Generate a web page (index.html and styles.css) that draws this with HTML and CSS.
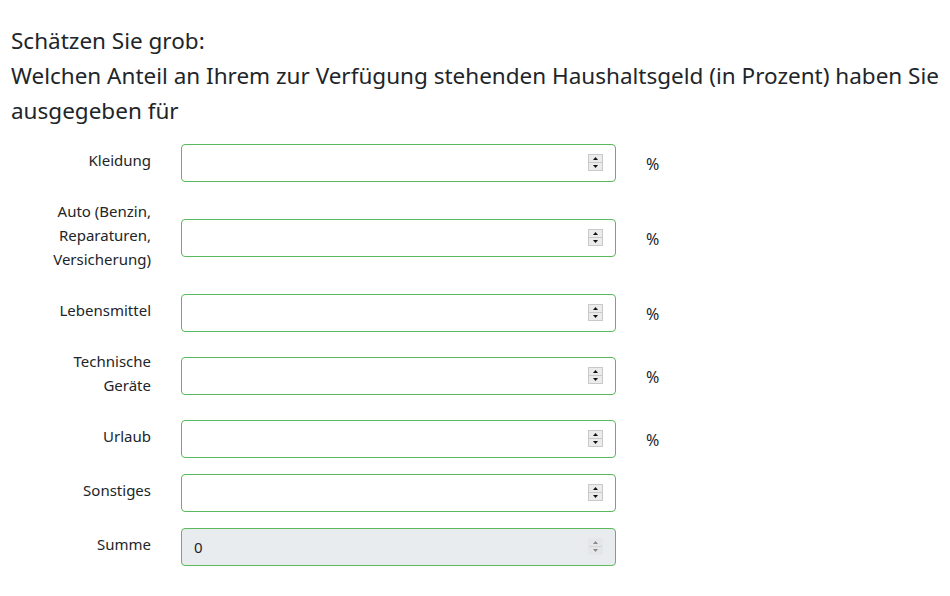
FILE: index.html
```html
<!DOCTYPE html>
<html lang="de">
<head>
    <meta charset="UTF-8">
    <meta name="viewport" content="width=device-width, initial-scale=1.0">
    <title>Haushaltsgeld</title>
    <link rel="stylesheet" href="styles.css">
</head>
<body>

    <div class="survey">
        <!-- Frage -->
        <p class="question">
            Schätzen Sie grob:<br>
            Welchen Anteil an Ihrem zur Verfügung stehenden Haushaltsgeld (in Prozent) haben Sie ausgegeben für
        </p>

        <div class="form-row spaced">
            <label class="field-label" for="kleidung">Kleidung</label>
            <div class="field">
                <input class="form-control" type="number" id="kleidung">
                <svg class="spinner" width="15" height="17" viewBox="0 0 15 17"><rect x="0.5" y="0.5" width="14" height="16" fill="#ebebeb" stroke="#c9c9c9"/><line x1="1" y1="8.5" x2="14" y2="8.5" stroke="#c9c9c9"/><polygon points="5,6 10,6 7.5,3" fill="#111"/><polygon points="5,11 10,11 7.5,14" fill="#111"/></svg>
            </div>
            <span class="unit">%</span>
        </div>

        <div class="form-row spaced">
            <label class="field-label" for="auto">Auto (Benzin, Reparaturen, Versicherung)</label>
            <div class="field">
                <input class="form-control" type="number" id="auto">
                <svg class="spinner" width="15" height="17" viewBox="0 0 15 17"><rect x="0.5" y="0.5" width="14" height="16" fill="#ebebeb" stroke="#c9c9c9"/><line x1="1" y1="8.5" x2="14" y2="8.5" stroke="#c9c9c9"/><polygon points="5,6 10,6 7.5,3" fill="#111"/><polygon points="5,11 10,11 7.5,14" fill="#111"/></svg>
            </div>
            <span class="unit">%</span>
        </div>

        <div class="form-row spaced">
            <label class="field-label" for="lebensmittel">Lebensmittel</label>
            <div class="field">
                <input class="form-control" type="number" id="lebensmittel">
                <svg class="spinner" width="15" height="17" viewBox="0 0 15 17"><rect x="0.5" y="0.5" width="14" height="16" fill="#ebebeb" stroke="#c9c9c9"/><line x1="1" y1="8.5" x2="14" y2="8.5" stroke="#c9c9c9"/><polygon points="5,6 10,6 7.5,3" fill="#111"/><polygon points="5,11 10,11 7.5,14" fill="#111"/></svg>
            </div>
            <span class="unit">%</span>
        </div>

        <div class="form-row spaced">
            <label class="field-label" for="technik">Technische Geräte</label>
            <div class="field">
                <input class="form-control" type="number" id="technik">
                <svg class="spinner" width="15" height="17" viewBox="0 0 15 17"><rect x="0.5" y="0.5" width="14" height="16" fill="#ebebeb" stroke="#c9c9c9"/><line x1="1" y1="8.5" x2="14" y2="8.5" stroke="#c9c9c9"/><polygon points="5,6 10,6 7.5,3" fill="#111"/><polygon points="5,11 10,11 7.5,14" fill="#111"/></svg>
            </div>
            <span class="unit">%</span>
        </div>

        <div class="form-row">
            <label class="field-label" for="urlaub">Urlaub</label>
            <div class="field">
                <input class="form-control" type="number" id="urlaub">
                <svg class="spinner" width="15" height="17" viewBox="0 0 15 17"><rect x="0.5" y="0.5" width="14" height="16" fill="#ebebeb" stroke="#c9c9c9"/><line x1="1" y1="8.5" x2="14" y2="8.5" stroke="#c9c9c9"/><polygon points="5,6 10,6 7.5,3" fill="#111"/><polygon points="5,11 10,11 7.5,14" fill="#111"/></svg>
            </div>
            <span class="unit">%</span>
        </div>

        <div class="form-row">
            <label class="field-label" for="sonstiges">Sonstiges</label>
            <div class="field">
                <input class="form-control" type="number" id="sonstiges">
                <svg class="spinner" width="15" height="17" viewBox="0 0 15 17"><rect x="0.5" y="0.5" width="14" height="16" fill="#ebebeb" stroke="#c9c9c9"/><line x1="1" y1="8.5" x2="14" y2="8.5" stroke="#c9c9c9"/><polygon points="5,6 10,6 7.5,3" fill="#111"/><polygon points="5,11 10,11 7.5,14" fill="#111"/></svg>
            </div>
        </div>

        <div class="form-row">
            <label class="field-label" for="summe">Summe</label>
            <div class="field">
                <input class="form-control" type="number" id="summe" value="0" disabled>
                <svg class="spinner" width="15" height="17" viewBox="0 0 15 17"><rect x="0" y="0" width="15" height="17" fill="#e4e6e8"/><line x1="1" y1="8.5" x2="14" y2="8.5" stroke="#d2d4d6"/><polygon points="5,6 10,6 7.5,3" fill="#8a8a8a"/><polygon points="5,11 10,11 7.5,14" fill="#8a8a8a"/></svg>
            </div>
        </div>
    </div>

</body>
</html>
```

FILE: styles.css
```css
/* Allgemein */
body {
    margin: 0;
    font-family: 'Noto Sans', 'Open Sans', sans-serif;
    color: #212529;
    background-color: #fff;
}

.survey {
    padding: 0 11px;
}

/* Frage */
.question {
    font-size: 22.5px;
    line-height: 35px;
    margin: 23px 0 16px;
}

/* Zeilen */
.form-row {
    display: flex;
    align-items: center;
    gap: 30px;
    padding-left: 35px;
    margin-bottom: 16px;
}

.form-row.spaced {
    margin-bottom: 20px;
}

.field-label {
    width: 105px;
    flex-shrink: 0;
    text-align: right;
    font-size: 15px;
    line-height: 24px;
    margin: -3px 0 3px;
}

.field {
    position: relative;
    width: 435px;
}

.form-control {
    display: block;
    box-sizing: border-box;
    width: 100%;
    height: 38px;
    padding: 6px 12px;
    font-family: inherit;
    font-size: 15px;
    color: #212529;
    background-color: #fff;
    border: 1px solid #5cb85c;
    border-radius: 4px;
    -moz-appearance: textfield;
}

.form-control::-webkit-inner-spin-button,
.form-control::-webkit-outer-spin-button {
    -webkit-appearance: none;
    margin: 0;
}

.form-control:disabled {
    background-color: #e9ecef;
    opacity: 1;
}

/* Pfeile */
.spinner {
    position: absolute;
    right: 13px;
    top: 10px;
}

.unit {
    font-size: 16px;
    padding-top: 2px;
}
```
